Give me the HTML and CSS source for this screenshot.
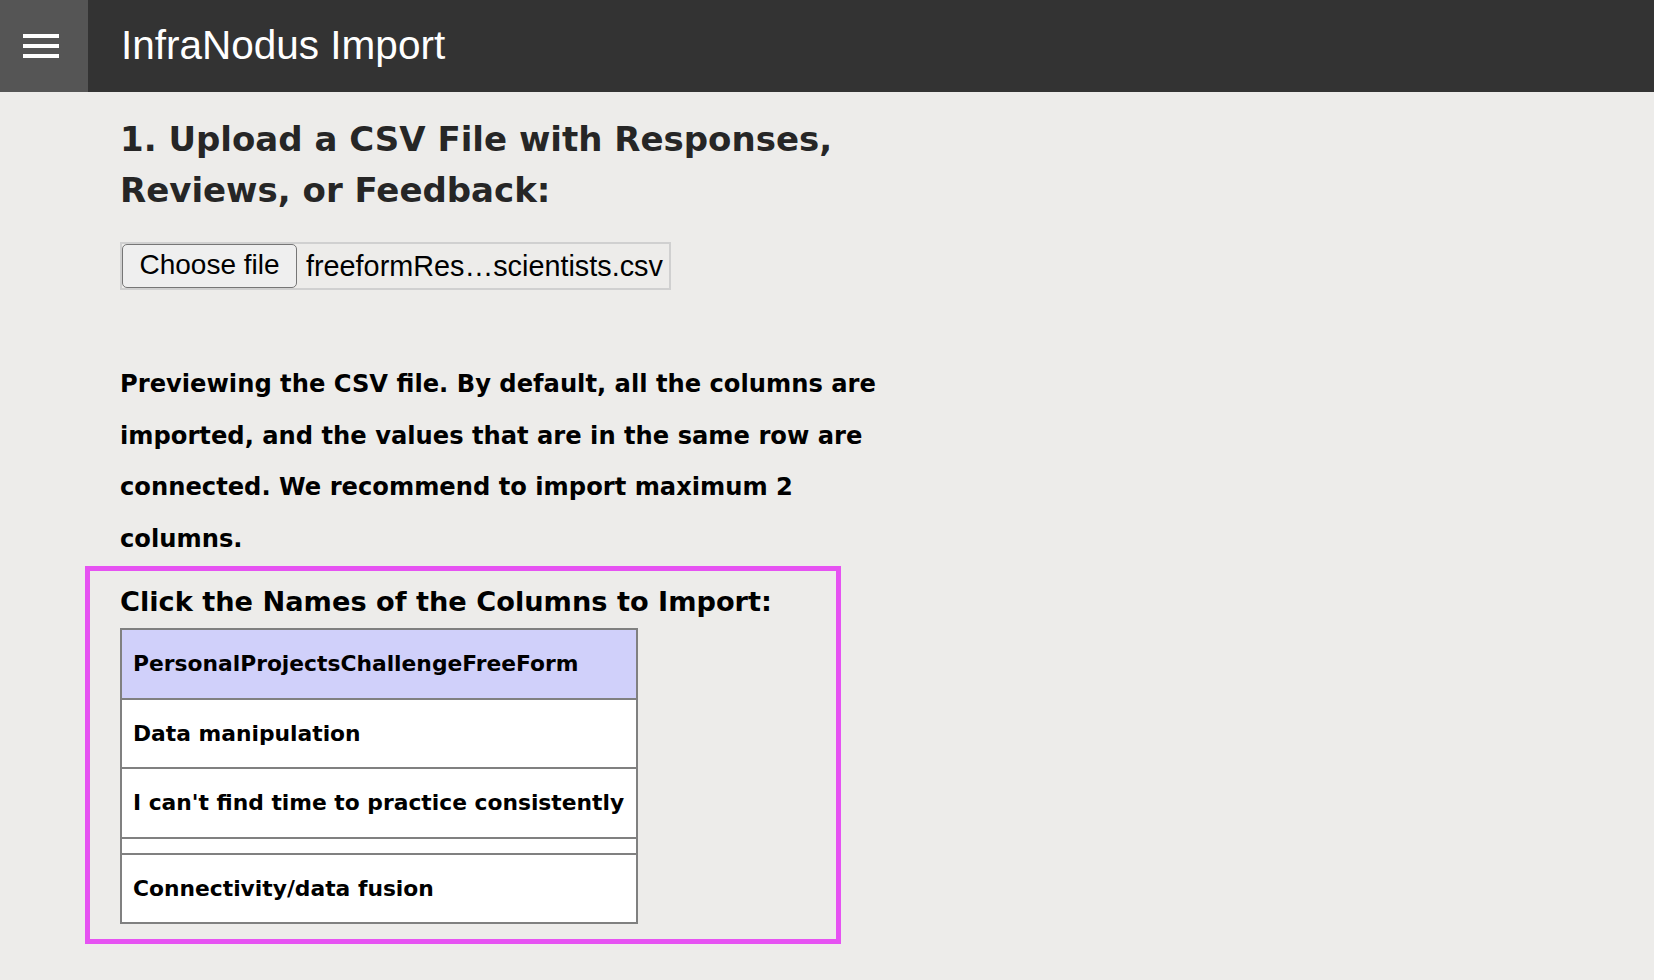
FILE: index.html
```html
<!DOCTYPE html>
<html lang="en">
<head>
  <meta charset="UTF-8">
  <title>InfraNodus Import</title>
  <link rel="stylesheet" href="styles.css">
</head>
<body>
  <header class="topbar">
    <button class="topbar_menu" aria-label="Menu">
      <span></span>
      <span></span>
      <span></span>
    </button>
    <div class="topbar_title">InfraNodus Import</div>
  </header>

  <main class="import_content">
    <h2 class="import_step">1. Upload a CSV File with Responses, Reviews, or Feedback:</h2>

    <div class="import_file">
      <span class="import_file-btn">Choose file</span>
      <span class="import_file-name">freeformRes…scientists.csv</span>
    </div>

    <p class="import_note">Previewing the CSV file. By default, all the columns are imported, and the values that are in the same row are connected. We recommend to import maximum 2 columns.</p>

    <div class="import_columns">
      <h3>Click the Names of the Columns to Import:</h3>
      <table class="import_table">
        <tr class="selected"><td>PersonalProjectsChallengeFreeForm</td></tr>
        <tr><td>Data manipulation</td></tr>
        <tr><td>I can't find time to practice consistently</td></tr>
        <tr><td></td></tr>
        <tr><td>Connectivity/data fusion</td></tr>
      </table>
    </div>
  </main>
</body>
</html>
```

FILE: styles.css
```css
body {
  margin: 0;
  padding: 0;
  background-color: #edecea;
  font-family: "DejaVu Sans", Verdana, sans-serif;
  color: #000;
}

.topbar {
  display: flex;
  align-items: stretch;
  height: 92px;
  background-color: #333;
}

.topbar_menu {
  width: 88px;
  border: none;
  padding: 0 6px 0 0;
  background-color: #555;
  display: flex;
  flex-direction: column;
  align-items: center;
  justify-content: center;
  gap: 6px;
  cursor: pointer;
}

.topbar_menu span {
  display: block;
  width: 36px;
  height: 4px;
  background-color: #fff;
}

.topbar_title {
  display: flex;
  align-items: center;
  padding-left: 33px;
  padding-bottom: 2px;
  font-family: "Liberation Sans", Arial, sans-serif;
  font-size: 40.5px;
  color: #fff;
}

.import_content {
  width: 790px;
  margin-left: 120px;
}

.import_step {
  margin: 22px 0 0;
  font-size: 34px;
  line-height: 51px;
  color: #262626;
}

.import_file {
  display: inline-flex;
  align-items: center;
  margin-top: 26px;
  border: 2px solid #d0d0d0;
  padding-right: 6px;
  font-family: "Liberation Sans", Arial, sans-serif;
  font-size: 28px;
}

.import_file-btn {
  display: block;
  width: 175px;
  height: 44px;
  box-sizing: border-box;
  line-height: 40px;
  text-align: center;
  border: 1px solid #767676;
  border-radius: 5px;
  background-color: #efefef;
}

.import_file-name {
  padding-left: 9px;
  font-size: 28.8px;
}

.import_note {
  margin: 69px 0 0;
  font-size: 24.2px;
  font-weight: bold;
  line-height: 51.5px;
}

.import_columns {
  box-sizing: border-box;
  width: 756px;
  margin: 1px 0 0 -35px;
  padding: 15px 30px 15px;
  border: 5px solid #e652f2;
}

.import_columns h3 {
  margin: 0 0 11px;
  font-size: 27.2px;
}

.import_table {
  width: 518px;
  border-collapse: collapse;
  border: 2px solid #808080;
  background-color: #fff;
  font-size: 21.8px;
  font-weight: bold;
}

.import_table td {
  padding: 7px 11px;
  line-height: 53.5px;
  border: 2px solid #808080;
  white-space: nowrap;
}

.import_table tr.selected td {
  background-color: #d0d0fa;
}
```
